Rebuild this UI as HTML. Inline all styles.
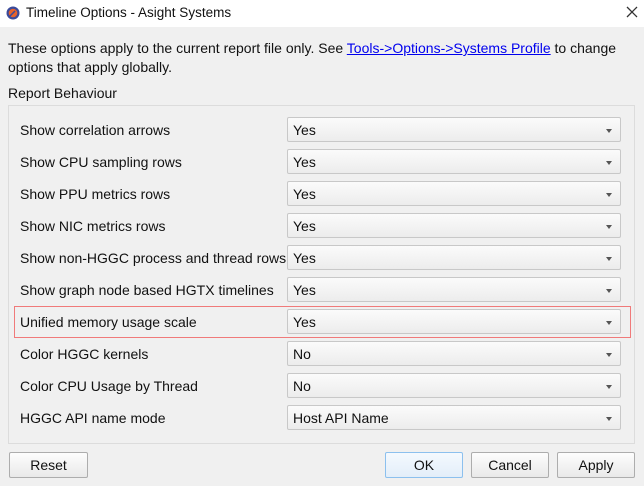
<!DOCTYPE html><html><head><style>
body{margin:0;width:644px;height:486px;background:#f0f0f0;font-family:"Liberation Sans",sans-serif;font-size:14px;color:#111;position:relative;overflow:hidden}
.t{position:absolute;white-space:nowrap}
.title{position:absolute;left:0;top:0;width:644px;height:27px;background:#fff}
.grp{position:absolute;left:8px;top:105px;width:625px;height:337px;border:1px solid #dcdcdc;background:#f0f0f0}
.cb{position:absolute;left:287px;width:334px;height:25px;border:1px solid #c8c8c8;border-radius:2px;background:linear-gradient(#fbfbfb,#ececec);box-sizing:border-box}
.cb span{position:absolute;left:5px;top:4px}
.cb i{position:absolute;right:8px;top:11px;border-left:3.5px solid transparent;border-right:3.5px solid transparent;border-top:4px solid #555}
.btn{position:absolute;top:452px;height:26px;border:1px solid #adadad;background:linear-gradient(#fdfdfd,#e9e9e9);box-sizing:border-box;text-align:center;line-height:24px;border-radius:2px}
</style></head><body>
<div class="title"></div>
<svg style="position:absolute;left:6px;top:6px" width="14" height="14"><circle cx="7" cy="7" r="6.5" fill="#3a4a9a"/><circle cx="7" cy="7" r="4.3" fill="#e8622a"/><path d="M4 10 L9 5" stroke="#3a4a9a" stroke-width="1.5"/></svg>
<div class="t" style="left:26px;top:5px;font-size:13.5px">Timeline Options - Asight Systems</div>
<svg style="position:absolute;left:626px;top:6px" width="12" height="12"><path d="M1 1L11 11M11 1L1 11" stroke="#333" stroke-width="1.3"/></svg>
<div class="t" style="left:8px;top:40px">These options apply to the current report file only. See <span style="color:#0000ee;text-decoration:underline">Tools-&gt;Options-&gt;Systems Profile</span> to change</div>
<div class="t" style="left:8px;top:59px">options that apply globally.</div>
<div class="t" style="left:8px;top:85px">Report Behaviour</div>
<div class="grp"></div>
<div style="position:absolute;left:14px;top:306px;width:617px;height:32px;border:1px solid #f07a7a;box-sizing:border-box"></div>

<div class="t" style="left:20px;top:122px">Show correlation arrows</div><div class="cb" style="top:117px"><span>Yes</span><i></i></div>
<div class="t" style="left:20px;top:154px">Show CPU sampling rows</div><div class="cb" style="top:149px"><span>Yes</span><i></i></div>
<div class="t" style="left:20px;top:186px">Show PPU metrics rows</div><div class="cb" style="top:181px"><span>Yes</span><i></i></div>
<div class="t" style="left:20px;top:218px">Show NIC metrics rows</div><div class="cb" style="top:213px"><span>Yes</span><i></i></div>
<div class="t" style="left:20px;top:250px">Show non-HGGC process and thread rows</div><div class="cb" style="top:245px"><span>Yes</span><i></i></div>
<div class="t" style="left:20px;top:282px">Show graph node based HGTX timelines</div><div class="cb" style="top:277px"><span>Yes</span><i></i></div>
<div class="t" style="left:20px;top:314px">Unified memory usage scale</div><div class="cb" style="top:309px"><span>Yes</span><i></i></div>
<div class="t" style="left:20px;top:346px">Color HGGC kernels</div><div class="cb" style="top:341px"><span>No</span><i></i></div>
<div class="t" style="left:20px;top:378px">Color CPU Usage by Thread</div><div class="cb" style="top:373px"><span>No</span><i></i></div>
<div class="t" style="left:20px;top:410px">HGGC API name mode</div><div class="cb" style="top:405px"><span>Host API Name</span><i></i></div>

<div class="btn" style="left:9px;width:79px">Reset</div>
<div class="btn" style="left:385px;width:78px;border-color:#8cc0ee;background:linear-gradient(#f4f9fe,#e3eef9)">OK</div>
<div class="btn" style="left:471px;width:78px">Cancel</div>
<div class="btn" style="left:557px;width:78px">Apply</div>
</body></html>
